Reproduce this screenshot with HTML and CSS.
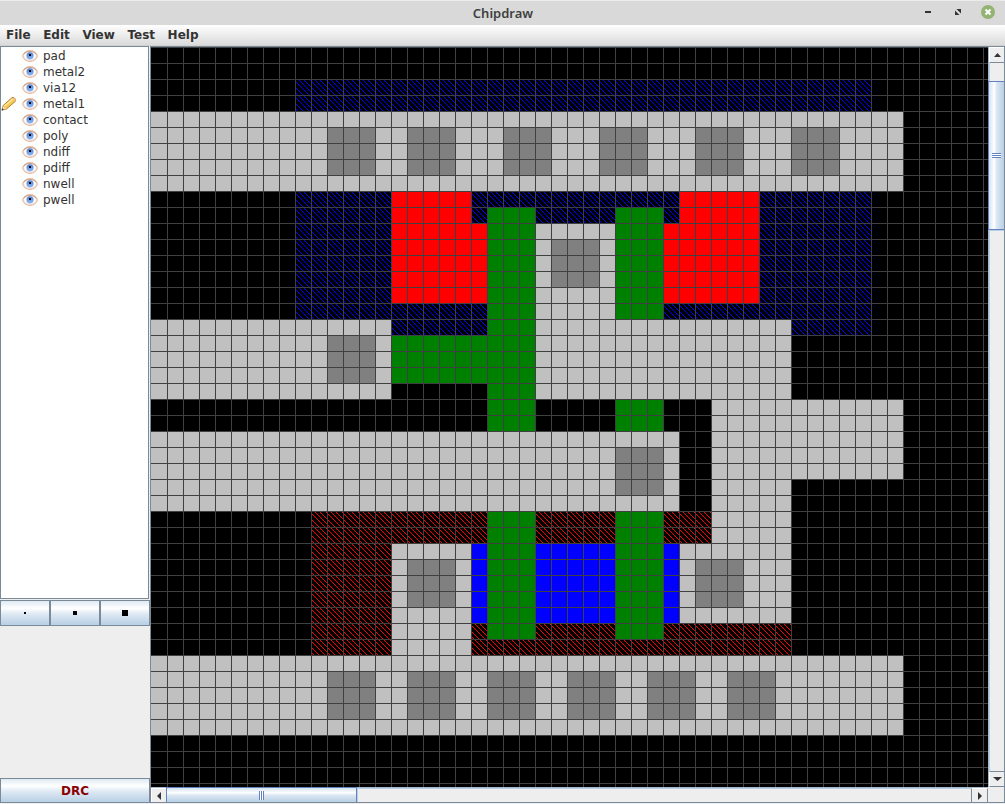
FILE: index.html
```
<!DOCTYPE html>
<html lang="en">
<head>
<meta charset="utf-8">
<title>Chipdraw</title>
<link rel="stylesheet" href="styles.css">
</head>
<body>
<svg class="defs" width="0" height="0" aria-hidden="true">
  <defs>
    <linearGradient id="iris" x1="0" y1="0" x2="0" y2="1"><stop offset="0" stop-color="#4b7fd8"/><stop offset="1" stop-color="#8db8f0"/></linearGradient>
    <symbol id="eye" viewBox="0 0 16 12">
      <path d="M.5 6C1.500 2.500 4.500.6 8 .6s6.500 1.900 7.500 5.400c-1 3.500-4 5.400-7.500 5.400S1.500 9.500.5 6z" fill="#f4e4da" stroke="#e0b59c" stroke-width="1"/>
      <path d="M2 6C3.500 3.500 5.500 2.300 8 2.300S12.500 3.500 14 6c-1.500 2.500-3.500 3.600-6 3.600S3.500 8.500 2 6z" fill="#fff"/>
      <path d="M1.500 4.500C3 2 5.500 1.500 8 1.500s5 .5 6.500 3" fill="none" stroke="#c9967a" stroke-width=".9"/>
      <circle cx="8" cy="5.800" r="3.600" fill="url(#iris)"/>
      <rect x="7" y="4" width="2" height="2" fill="#05070d"/>
    </symbol>
  </defs>
</svg>
<div class="window">
  <header class="titlebar">
    <span class="title">Chipdraw</span>
    <svg class="controls" width="80" height="25" viewBox="925 0 80 25">
      <rect x="925" y="11" width="6" height="2" fill="#333"/>
      <path d="M956.500 9h4.500v4.500zM955 10.500v4.500h4.500z" fill="#333"/>
      <circle cx="988" cy="12" r="7" fill="#92b372"/>
      <path d="M985.500 9.500l5 5m0-5l-5 5" stroke="#fff" stroke-width="2"/>
    </svg>
  </header>
  <nav class="menubar"><span>File</span><span>Edit</span><span>View</span><span>Test</span><span>Help</span></nav>
  <div class="content">
    <aside class="sidebar">
      <ul class="layers">
        <li><i></i><svg class="eye"><use href="#eye"/></svg>pad</li>
        <li><i></i><svg class="eye"><use href="#eye"/></svg>metal2</li>
        <li><i></i><svg class="eye"><use href="#eye"/></svg>via12</li>
        <li><i><svg width="16" height="16" viewBox="0 0 16 16"><path d="M1 14l1.200-4.500L10.500 2q1.500-1.300 3 0t1 3.200L5.500 13z" fill="#f5c852" stroke="#b17a20" stroke-width=".9"/><path d="M4 9.800l7.500-6.600" stroke="#ffeaa0" stroke-width="1.500"/><path d="M1.200 14l1.200-4 2.800 2.600z" fill="#f2dfbd"/><path d="M.6 14.700l.7-2.400 1.500 1.500z" fill="#333"/><path d="M11.300 2.200l3 3.200.4-1.700-1.900-1.900z" fill="#f0c0a8"/></svg></i><svg class="eye"><use href="#eye"/></svg>metal1</li>
        <li><i></i><svg class="eye"><use href="#eye"/></svg>contact</li>
        <li><i></i><svg class="eye"><use href="#eye"/></svg>poly</li>
        <li><i></i><svg class="eye"><use href="#eye"/></svg>ndiff</li>
        <li><i></i><svg class="eye"><use href="#eye"/></svg>pdiff</li>
        <li><i></i><svg class="eye"><use href="#eye"/></svg>nwell</li>
        <li><i></i><svg class="eye"><use href="#eye"/></svg>pwell</li>
      </ul>
      <div class="brushes">
        <button class="metal"><b class="dot small"></b></button>
        <button class="metal"><b class="dot medium"></b></button>
        <button class="metal"><b class="dot large"></b></button>
      </div>
      <button class="metal drc">DRC</button>
    </aside>
    <main class="editor">
      <svg class="canvas" width="837" height="740" viewBox="0 0 837 740" shape-rendering="crispEdges">
        <defs>
          <path id="contact" d="M0 0h3v3H0z" fill="#808080"/>
          <path id="steps" d="M3 0h1v1h-1zM4 1h1v1h-1zM5 2h1v1h-1zM6 3h1v1h-1zM7 4h1v1h-1zM8 5h1v1h-1zM9 6h1v1h-1zM10 7h1v1h-1zM11 8h1v1h-1zM12 9h1v1h-1zM13 10h1v1h-1zM14 11h1v1h-1zM15 12h1v1h-1zM0 13h1v1h-1zM1 14h1v1h-1zM2 15h1v1h-1zM8 0h1v1h-1zM9 1h1v1h-1zM10 2h1v1h-1zM11 3h1v1h-1zM12 4h1v1h-1zM13 5h1v1h-1zM14 6h1v1h-1zM15 7h1v1h-1zM0 8h1v1h-1zM1 9h1v1h-1zM2 10h1v1h-1zM3 11h1v1h-1zM4 12h1v1h-1zM5 13h1v1h-1zM6 14h1v1h-1zM7 15h1v1h-1zM14 0h1v1h-1zM15 1h1v1h-1zM0 2h1v1h-1zM1 3h1v1h-1zM2 4h1v1h-1zM3 5h1v1h-1zM4 6h1v1h-1zM5 7h1v1h-1zM6 8h1v1h-1zM7 9h1v1h-1zM8 10h1v1h-1zM9 11h1v1h-1zM10 12h1v1h-1zM11 13h1v1h-1zM12 14h1v1h-1zM13 15h1v1h-1z"/>
          <pattern id="grid" width="16" height="16" patternUnits="userSpaceOnUse"><path d="M0 0h16v1H1v15H0z" fill="#404040"/></pattern>
          <pattern id="hatchBlue" width="16" height="16" patternUnits="userSpaceOnUse"><use href="#steps" fill="#00f"/></pattern>
          <pattern id="hatchRed" width="16" height="16" patternUnits="userSpaceOnUse"><use href="#steps" fill="#f00"/></pattern>
        </defs>
        <rect width="837" height="740" fill="#000"/>
        <rect x="144" y="32" width="576" height="256" fill="url(#hatchBlue)"/>
        <path d="M160 464h400v32H240v112h-80zM320 576h320v32H320z" fill="url(#hatchRed)"/>
        <g transform="scale(16)">
          <path d="M15 9h5v2h1v5h-6zM33 9h5v7h-6v-5h1z" fill="#f00"/>
          <path d="M20 31h13v5H20z" fill="#00f"/>
          <path d="M0 4h47v5H0zM24 11h5v6h11v5H24zM0 17h15v5H0zM35 22h12v5h-7v9h-7v-5h2zM0 24h33v5H0zM15 31h5v7h-5zM0 38h47v5H0z" fill="#c0c0c0"/>
          <path d="M21 10h3v14h-3v-3h-6v-3h6zM29 10h3v7h-3zM29 22h3v2h-3zM21 29h3v8h-3zM29 29h3v8h-3z" fill="#008000"/>
          <use href="#contact" x="11" y="5"/><use href="#contact" x="16" y="5"/><use href="#contact" x="22" y="5"/><use href="#contact" x="28" y="5"/><use href="#contact" x="34" y="5"/><use href="#contact" x="40" y="5"/>
          <use href="#contact" x="25" y="12"/><use href="#contact" x="11" y="18"/><use href="#contact" x="29" y="25"/><use href="#contact" x="16" y="32"/><use href="#contact" x="34" y="32"/>
          <use href="#contact" x="11" y="39"/><use href="#contact" x="16" y="39"/><use href="#contact" x="21" y="39"/><use href="#contact" x="26" y="39"/><use href="#contact" x="31" y="39"/><use href="#contact" x="36" y="39"/>
        </g>
        <rect x="1" width="836" height="740" fill="url(#grid)"/>
        <path d="M.5 0v740" stroke="#404040" stroke-dasharray="1 15"/>
      </svg>
      <div class="vscroll">
        <span class="arrow"><svg width="7" height="4"><path d="M0 4L3.500 0 7 4z"/></svg></span>
        <span class="gap"></span>
        <span class="thumb"><i class="grip"></i></span>
        <span class="track"></span>
        <span class="arrow down"><svg width="9" height="4"><path d="M0 0h9L4.500 4z"/></svg></span>
      </div>
      <div class="hscroll">
        <span class="arrow"><svg width="4" height="8"><path d="M4 0v8L0 4z"/></svg></span>
        <span class="thumb"><i class="grip"></i></span>
        <span class="track"></span>
        <span class="arrow right"><svg width="4" height="8"><path d="M0 0v8l4-4z"/></svg></span>
      </div>
      <div class="corner"></div>
    </main>
  </div>
</div>
</body>
</html>
```
FILE: styles.css
```
* { box-sizing: border-box; }
body { margin: 0; width: 1005px; height: 804px; overflow: hidden; background: #eee; font: 12px "DejaVu Sans", sans-serif; color: #333; }
svg { display: block; }
.defs { position: absolute; }
.window { display: flex; flex-direction: column; height: 804px; }
.titlebar { display: grid; grid-template-columns: 80px 1fr 80px; align-items: center; height: 25px; background: #d9d9d9; border-top: 1px solid #ececec; }
.title { grid-column: 2; text-align: center; font: 600 13px/24px "Noto Sans", sans-serif; color: #404040; padding-left: 1px; }
.controls { margin-top: -1px; }
.menubar { display: flex; gap: 12.600px; height: 21px; padding: 0 6px; line-height: 20px; font-weight: bold; background: linear-gradient(#fff, #dadada); border-bottom: 1px solid #d0d0d0; }
.content { display: flex; height: 758px; }
.sidebar { display: flex; flex-direction: column; width: 150px; height: 757px; }
.layers { list-style: none; margin: 0 1px 1px 0; padding: 1px 0 0; height: 553px; background: #fff; border: 1px solid #7a8a99; }
.layers li { display: flex; height: 16px; line-height: 16px; align-items: center; }
.layers i { width: 21px; height: 16px; flex: none; }
.eye { width: 16px; height: 12px; margin-right: 5px; flex: none; }
.brushes { display: flex; height: 26px; }
.metal { display: flex; align-items: center; justify-content: center; flex: 1; padding: 0; border: 1px solid #7a8a99; background: linear-gradient(#dfe9f3, #fff 30%, #dde8f3 55%, #b8cfe5); }
.dot { background: #000; }
.small { width: 2px; height: 2px; }
.medium { width: 4px; height: 4px; }
.large { width: 6px; height: 6px; }
.drc { flex: none; height: 25px; margin-top: auto; font: bold 12px "DejaVu Sans", sans-serif; color: #8b0000; }
.editor { display: grid; grid-template: 740px 15px / 837px 16px; width: 855px; height: 757px; border: 1px solid #7a8a99; }
.vscroll { display: flex; flex-direction: column; border-left: 1px solid #a3b8cc; background: #eee; }
.arrow { display: flex; align-items: center; justify-content: center; flex: none; background: #eee; fill: #333; }
.vscroll .arrow { height: 16px; border-top: 1px solid #fff; border-left: 1px solid #fff; border-bottom: 1px solid #7a8a99; }
.vscroll .down { border-top-color: #7a8a99; }
.gap { height: 18px; border-left: 1px solid #b8cfe5; }
.vscroll .thumb { height: 149px; margin-left: -1px; display: grid; place-items: center; border: 1px solid #6382bf; border-right: 0; background: linear-gradient(90deg, #d4e2ef, #fff 35%, #dde8f3 50%, #b8cfe5); }
.track { flex: 1; border: 0 solid #b8cfe5; background: #eee; }
.vscroll .track { border-left-width: 1px; border-top-width: 1px; }
.vscroll .grip { width: 9px; height: 5px; background: repeating-linear-gradient(#6382bf 0 1px, #fff 1px 2px); }
.hscroll { display: flex; border-top: 1px solid #a3b8cc; background: #eee; }
.hscroll .arrow { width: 15px; border-left: 1px solid #fff; border-top: 1px solid #fff; }
.hscroll .right { width: 17px; border-left-color: #7a8a99; border-right: 1px solid #7a8a99; }
.hscroll .thumb { width: 191px; margin-top: -1px; display: grid; place-items: center; border: 1px solid #6382bf; border-bottom: 0; background: linear-gradient(#d4e2ef, #fff 35%, #dde8f3 50%, #b8cfe5); }
.hscroll .grip { width: 5px; height: 9px; background: repeating-linear-gradient(90deg, #6382bf 0 1px, #fff 1px 2px); }
.hscroll .track { border-top-width: 1px; border-left-width: 1px; }
.corner { background: #eee; }
```
